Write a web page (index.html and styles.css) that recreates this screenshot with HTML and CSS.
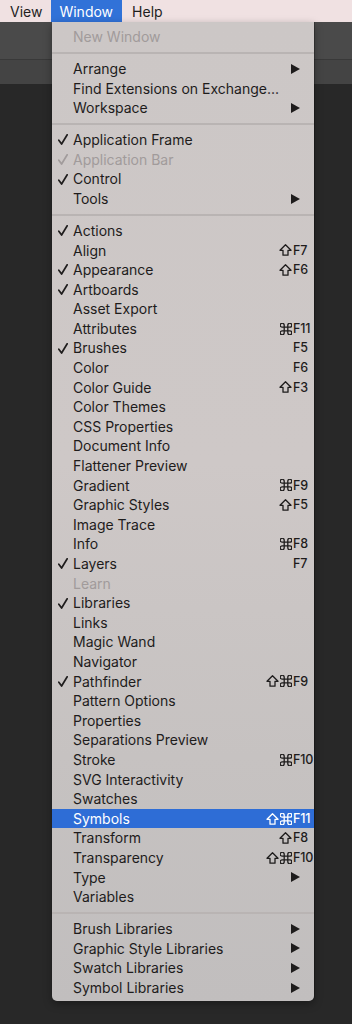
FILE: index.html
```html
<!DOCTYPE html>
<html>
<head>
<meta charset="utf-8">
<link rel="stylesheet" href="styles.css">
</head>
<body>
<div class="menubar">
  <span class="mb-item">View</span>
  <span class="mb-item active">Window</span>
  <span class="mb-item help">Help</span>
</div>
<div class="workspace">
  <div class="strip strip-a"></div>
  <div class="strip strip-b"></div>
</div>

<svg width="0" height="0" class="defs">
  <defs>
    <symbol id="chk" viewBox="0 0 10 11"><path d="M0.8 6.2 L3.6 10 L9.2 0.8" fill="none" stroke="currentColor" stroke-width="1.7" stroke-linecap="round" stroke-linejoin="round"/></symbol>
    <symbol id="arr" viewBox="0 0 9 10"><polygon points="0,0 9,5 0,10" fill="currentColor"/></symbol>
    <symbol id="shf" viewBox="0 0 13 12"><polygon points="6.5,0.8 12,6.3 9,6.3 9,11.2 4,11.2 4,6.3 1,6.3" fill="none" stroke="currentColor" stroke-width="1.3" stroke-linejoin="round"/></symbol>
    <symbol id="cmd" viewBox="0 0 12 12"><path d="M4.2 2.2V9.8M7.8 2.2V9.8M2.2 4.2H9.8M2.2 7.8H9.8M4.2 2.2A2 2 0 1 0 2.2 4.2M7.8 2.2A2 2 0 1 1 9.8 4.2M2.2 7.8A2 2 0 1 0 4.2 9.8M9.8 7.8A2 2 0 1 1 7.8 9.8" fill="none" stroke="currentColor" stroke-width="1.3"/></symbol>
  </defs>
</svg>

<div class="menu">
  <div class="row disabled"><span class="chk"></span><span class="lbl">New Window</span></div>
  <div class="sep"></div>
  <div class="row"><span class="chk"></span><span class="lbl">Arrange</span><span class="mods"></span><span class="key"><svg class="arrow"><use href="#arr"/></svg></span></div>
  <div class="row"><span class="chk"></span><span class="lbl">Find Extensions on Exchange...</span></div>
  <div class="row"><span class="chk"></span><span class="lbl">Workspace</span><span class="mods"></span><span class="key"><svg class="arrow"><use href="#arr"/></svg></span></div>
  <div class="sep"></div>
  <div class="row"><span class="chk"><svg class="check"><use href="#chk"/></svg></span><span class="lbl">Application Frame</span></div>
  <div class="row disabled"><span class="chk"><svg class="check"><use href="#chk"/></svg></span><span class="lbl">Application Bar</span></div>
  <div class="row"><span class="chk"><svg class="check"><use href="#chk"/></svg></span><span class="lbl">Control</span></div>
  <div class="row"><span class="chk"></span><span class="lbl">Tools</span><span class="mods"></span><span class="key"><svg class="arrow"><use href="#arr"/></svg></span></div>
  <div class="sep"></div>
  <div class="row"><span class="chk"><svg class="check"><use href="#chk"/></svg></span><span class="lbl">Actions</span></div>
  <div class="row"><span class="chk"></span><span class="lbl">Align</span><span class="mods"><svg class="shift"><use href="#shf"/></svg></span><span class="key">F7</span></div>
  <div class="row"><span class="chk"><svg class="check"><use href="#chk"/></svg></span><span class="lbl">Appearance</span><span class="mods"><svg class="shift"><use href="#shf"/></svg></span><span class="key">F6</span></div>
  <div class="row"><span class="chk"><svg class="check"><use href="#chk"/></svg></span><span class="lbl">Artboards</span></div>
  <div class="row"><span class="chk"></span><span class="lbl">Asset Export</span></div>
  <div class="row"><span class="chk"></span><span class="lbl">Attributes</span><span class="mods"><svg class="cmd"><use href="#cmd"/></svg></span><span class="key">F11</span></div>
  <div class="row"><span class="chk"><svg class="check"><use href="#chk"/></svg></span><span class="lbl">Brushes</span><span class="mods"></span><span class="key">F5</span></div>
  <div class="row"><span class="chk"></span><span class="lbl">Color</span><span class="mods"></span><span class="key">F6</span></div>
  <div class="row"><span class="chk"></span><span class="lbl">Color Guide</span><span class="mods"><svg class="shift"><use href="#shf"/></svg></span><span class="key">F3</span></div>
  <div class="row"><span class="chk"></span><span class="lbl">Color Themes</span></div>
  <div class="row"><span class="chk"></span><span class="lbl">CSS Properties</span></div>
  <div class="row"><span class="chk"></span><span class="lbl">Document Info</span></div>
  <div class="row"><span class="chk"></span><span class="lbl">Flattener Preview</span></div>
  <div class="row"><span class="chk"></span><span class="lbl">Gradient</span><span class="mods"><svg class="cmd"><use href="#cmd"/></svg></span><span class="key">F9</span></div>
  <div class="row"><span class="chk"></span><span class="lbl">Graphic Styles</span><span class="mods"><svg class="shift"><use href="#shf"/></svg></span><span class="key">F5</span></div>
  <div class="row"><span class="chk"></span><span class="lbl">Image Trace</span></div>
  <div class="row"><span class="chk"></span><span class="lbl">Info</span><span class="mods"><svg class="cmd"><use href="#cmd"/></svg></span><span class="key">F8</span></div>
  <div class="row"><span class="chk"><svg class="check"><use href="#chk"/></svg></span><span class="lbl">Layers</span><span class="mods"></span><span class="key">F7</span></div>
  <div class="row disabled"><span class="chk"></span><span class="lbl">Learn</span></div>
  <div class="row"><span class="chk"><svg class="check"><use href="#chk"/></svg></span><span class="lbl">Libraries</span></div>
  <div class="row"><span class="chk"></span><span class="lbl">Links</span></div>
  <div class="row"><span class="chk"></span><span class="lbl">Magic Wand</span></div>
  <div class="row"><span class="chk"></span><span class="lbl">Navigator</span></div>
  <div class="row"><span class="chk"><svg class="check"><use href="#chk"/></svg></span><span class="lbl">Pathfinder</span><span class="mods"><svg class="shift"><use href="#shf"/></svg><svg class="cmd"><use href="#cmd"/></svg></span><span class="key">F9</span></div>
  <div class="row"><span class="chk"></span><span class="lbl">Pattern Options</span></div>
  <div class="row"><span class="chk"></span><span class="lbl">Properties</span></div>
  <div class="row"><span class="chk"></span><span class="lbl">Separations Preview</span></div>
  <div class="row"><span class="chk"></span><span class="lbl">Stroke</span><span class="mods"><svg class="cmd"><use href="#cmd"/></svg></span><span class="key">F10</span></div>
  <div class="row"><span class="chk"></span><span class="lbl">SVG Interactivity</span></div>
  <div class="row"><span class="chk"></span><span class="lbl">Swatches</span></div>
  <div class="row selected"><span class="chk"></span><span class="lbl">Symbols</span><span class="mods"><svg class="shift"><use href="#shf"/></svg><svg class="cmd"><use href="#cmd"/></svg></span><span class="key">F11</span></div>
  <div class="row"><span class="chk"></span><span class="lbl">Transform</span><span class="mods"><svg class="shift"><use href="#shf"/></svg></span><span class="key">F8</span></div>
  <div class="row"><span class="chk"></span><span class="lbl">Transparency</span><span class="mods"><svg class="shift"><use href="#shf"/></svg><svg class="cmd"><use href="#cmd"/></svg></span><span class="key">F10</span></div>
  <div class="row"><span class="chk"></span><span class="lbl">Type</span><span class="mods"></span><span class="key"><svg class="arrow"><use href="#arr"/></svg></span></div>
  <div class="row"><span class="chk"></span><span class="lbl">Variables</span></div>
  <div class="sep"></div>
  <div class="row"><span class="chk"></span><span class="lbl">Brush Libraries</span><span class="mods"></span><span class="key"><svg class="arrow"><use href="#arr"/></svg></span></div>
  <div class="row"><span class="chk"></span><span class="lbl">Graphic Style Libraries</span><span class="mods"></span><span class="key"><svg class="arrow"><use href="#arr"/></svg></span></div>
  <div class="row"><span class="chk"></span><span class="lbl">Swatch Libraries</span><span class="mods"></span><span class="key"><svg class="arrow"><use href="#arr"/></svg></span></div>
  <div class="row"><span class="chk"></span><span class="lbl">Symbol Libraries</span><span class="mods"></span><span class="key"><svg class="arrow"><use href="#arr"/></svg></span></div>
</div>
</body>
</html>
```

FILE: styles.css
```css
html, body {
  margin: 0;
  padding: 0;
}
body {
  width: 352px;
  height: 1024px;
  background: #282828;
  font-family: Inter, "Liberation Sans", sans-serif;
  position: relative;
  overflow: hidden;
}
.defs {
  position: absolute;
  width: 0;
  height: 0;
}
.menubar {
  height: 22px;
  background: #f0e1e2;
  display: flex;
  align-items: stretch;
  padding-left: 2px;
  font-size: 14px;
  color: #1e1e1e;
}
.mb-item {
  display: flex;
  align-items: center;
  padding: 0 9px 0 8px;
}
.mb-item.help {
  padding-left: 10px;
}
.mb-item.active {
  background: #3172d8;
  color: #ffffff;
}
.workspace {
  display: flex;
  flex-direction: column;
}
.strip-a {
  height: 37px;
  background: #4a4a4a;
  border-bottom: 1px solid #393939;
}
.strip-b {
  height: 24px;
  background: #444444;
}
.menu {
  position: absolute;
  left: 52px;
  top: 22px;
  width: 262px;
  padding: 5px 0 4px;
  box-sizing: border-box;
  background: linear-gradient(180deg, #ccc7c6 0%, #cec8c7 45%, #c6c2c1 75%, #c1bebe 100%);
  border-radius: 0 0 5px 5px;
  box-shadow: 0 3px 8px rgba(0, 0, 0, 0.35), 1px 0 0 rgba(0,0,0,0.25);
  color: #1e1c1c;
  font-size: 14px;
}
.row {
  height: 19.6px;
  display: grid;
  grid-template-columns: 21px 1fr auto 22px;
  align-items: center;
  line-height: 19.6px;
  white-space: nowrap;
}
.row.disabled {
  color: #a19b9b;
}
.row.selected {
  background: #2e6dd6;
  color: #ffffff;
}
.chk {
  display: flex;
  align-items: center;
  padding-left: 6px;
  height: 100%;
}
.check {
  width: 10px;
  height: 11px;
}
.lbl {
  overflow: hidden;
}
.mods {
  display: flex;
  align-items: center;
  justify-content: flex-end;
  gap: 1px;
  height: 100%;
}
.key {
  display: flex;
  align-items: center;
  padding-left: 1px;
  font-size: 12.5px;
  font-weight: 500;
  letter-spacing: -0.2px;
  height: 100%;
}
.shift {
  width: 13px;
  height: 12px;
}
.cmd {
  width: 12px;
  height: 12px;
}
.arrow {
  width: 9px;
  height: 10px;
  margin-left: -2px;
}
.sep {
  height: 12.4px;
  display: flex;
  align-items: center;
}
.sep::before {
  content: "";
  display: block;
  width: 100%;
  height: 2px;
  background: #b9b4b3;
}
```
